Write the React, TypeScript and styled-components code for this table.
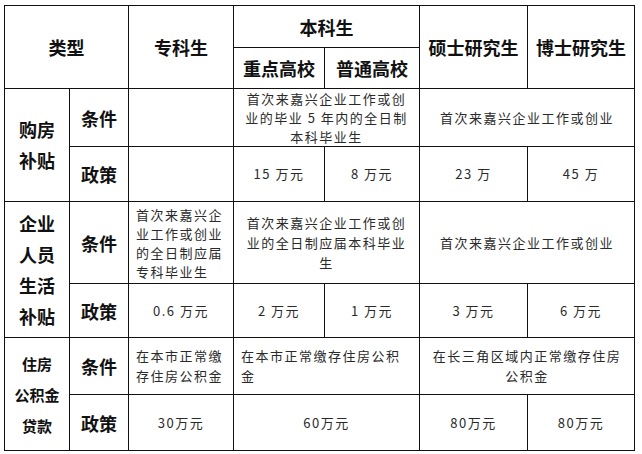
import styled, { createGlobalStyle } from "styled-components";

const GlobalStyle = createGlobalStyle`
  html, body {
    margin: 0;
    padding: 0;
    background: #fff;
  }
  body {
    font-family: "Noto Sans CJK SC", "Noto Sans", sans-serif;
    color: #111;
  }
`;

const Page = styled.div`
  padding: 5px 0 0 4px;
`;

const Table = styled.table`
  border-collapse: collapse;
  table-layout: fixed;
  width: 630px;
`;

const Col = styled.col<{ $w: number }>`
  width: ${(p) => p.$w}px;
`;

const Row = styled.tr<{ $h: number }>`
  height: ${(p) => p.$h}px;
`;

const Cell = styled.td<{ $align?: "left" | "center"; $lh?: number }>`
  border: 1px solid #111;
  padding: ${(p) => (p.$align === "left" ? "0 8px 0 7px" : "0 8px")};
  text-align: ${(p) => p.$align ?? "center"};
  vertical-align: middle;
  font-size: 13px;
  letter-spacing: 1.5px;
  line-height: ${(p) => p.$lh ?? 20}px;
  font-weight: 400;
  color: #2a2a2a;
`;

const HeadCell = styled.td`
  border: 1px solid #111;
  padding: 0;
  text-align: center;
  vertical-align: middle;
  font-size: 18px;
  line-height: 24px;
  font-weight: 700;
  color: #111;
`;

const Label = styled(HeadCell)<{ $size?: number }>`
  font-size: ${(p) => p.$size ?? 18}px;
  line-height: 31px;
`;

export default function App() {
  return (
    <Page>
      <GlobalStyle />
      <Table>
        <colgroup>
          <Col $w={65} />
          <Col $w={59} />
          <Col $w={105} />
          <Col $w={91} />
          <Col $w={95} />
          <Col $w={108} />
          <Col $w={107} />
        </colgroup>
        <tbody>
          <Row $h={42}>
            <HeadCell colSpan={2} rowSpan={2}>类型</HeadCell>
            <HeadCell rowSpan={2}>专科生</HeadCell>
            <HeadCell colSpan={2}>本科生</HeadCell>
            <HeadCell rowSpan={2}>硕士研究生</HeadCell>
            <HeadCell rowSpan={2}>博士研究生</HeadCell>
          </Row>
          <Row $h={41}>
            <HeadCell>重点高校</HeadCell>
            <HeadCell>普通高校</HeadCell>
          </Row>

          <Row $h={58}>
            <Label rowSpan={2}>
              购房
              <br />
              补贴
            </Label>
            <HeadCell>条件</HeadCell>
            <Cell />
            <Cell colSpan={2} $lh={19}>
              首次来嘉兴企业工作或创业的毕业 5 年内的全日制本科毕业生
            </Cell>
            <Cell colSpan={2}>首次来嘉兴企业工作或创业</Cell>
          </Row>
          <Row $h={55}>
            <HeadCell>政策</HeadCell>
            <Cell />
            <Cell>15 万元</Cell>
            <Cell>8 万元</Cell>
            <Cell>23 万</Cell>
            <Cell>45 万</Cell>
          </Row>

          <Row $h={82}>
            <Label rowSpan={2}>
              企业
              <br />
              人员
              <br />
              生活
              <br />
              补贴
            </Label>
            <HeadCell>条件</HeadCell>
            <Cell $align="left" $lh={19}>
              首次来嘉兴企业工作或创业的全日制应届专科毕业生
            </Cell>
            <Cell colSpan={2}>首次来嘉兴企业工作或创业的全日制应届本科毕业生</Cell>
            <Cell colSpan={2}>首次来嘉兴企业工作或创业</Cell>
          </Row>
          <Row $h={54}>
            <HeadCell>政策</HeadCell>
            <Cell>0.6 万元</Cell>
            <Cell>2 万元</Cell>
            <Cell>1 万元</Cell>
            <Cell>3 万元</Cell>
            <Cell>6 万元</Cell>
          </Row>

          <Row $h={57}>
            <Label rowSpan={2} $size={15}>
              住房
              <br />
              公积金
              <br />
              贷款
            </Label>
            <HeadCell>条件</HeadCell>
            <Cell $align="left">在本市正常缴存住房公积金</Cell>
            <Cell colSpan={2} $align="left">在本市正常缴存住房公积金</Cell>
            <Cell colSpan={2}>在长三角区域内正常缴存住房公积金</Cell>
          </Row>
          <Row $h={56}>
            <HeadCell>政策</HeadCell>
            <Cell>30万元</Cell>
            <Cell colSpan={2}>60万元</Cell>
            <Cell>80万元</Cell>
            <Cell>80万元</Cell>
          </Row>
        </tbody>
      </Table>
    </Page>
  );
}
